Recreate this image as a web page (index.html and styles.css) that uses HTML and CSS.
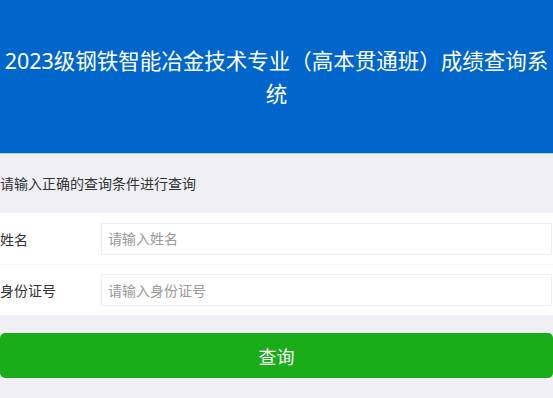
FILE: index.html
```html
<!DOCTYPE html>
<html lang="zh-CN">
<head>
    <meta charset="UTF-8">
    <meta name="viewport" content="width=device-width, initial-scale=1.0">
    <title>成绩查询系统</title>
    <link rel="stylesheet" href="styles.css">
</head>
<body>
    <div class="header">
        <h1 class="title">2023级钢铁智能冶金技术专业（高本贯通班）成绩查询系统</h1>
    </div>

    <div class="tips">请输入正确的查询条件进行查询</div>

    <div class="form">
        <div class="row">
            <label class="label" for="name">姓名</label>
            <input class="input" type="text" id="name" placeholder="请输入姓名">
        </div>
        <div class="row">
            <label class="label" for="idcard">身份证号</label>
            <input class="input" type="text" id="idcard" placeholder="请输入身份证号">
        </div>
    </div>

    <div class="actions">
        <button class="btn-query">查询</button>
    </div>
</body>
</html>
```

FILE: styles.css
```css
body {
  margin: 0;
  background-color: #efeff4;
  font-family: "Noto Sans", "Noto Sans CJK SC", sans-serif;
  color: #333;
}

.header {
  background-color: #0066cc;
  border-bottom: 1px solid #a9cdf0;
  height: 153px;
  display: flex;
  align-items: center;
  justify-content: center;
}

.title {
  margin: 0;
  font-size: 21.5px;
  font-weight: normal;
  line-height: 33px;
  color: #fff;
  text-align: center;
}

.tips {
  height: 59px;
  line-height: 59px;
  font-size: 14px;
  color: #333;
}

.form {
  background-color: #fff;
}

.row {
  display: flex;
  align-items: center;
  height: 51px;
}

.row + .row {
  border-top: 1px solid #f6f6f6;
  height: 50px;
}

.label {
  width: 101px;
  font-size: 14px;
  color: #333;
}

.input {
  flex: 1;
  height: 32px;
  box-sizing: border-box;
  border: 1px solid #eee;
  padding: 0 6px;
  font-size: 14px;
  font-family: inherit;
  color: #333;
  outline: none;
  margin-right: 1px;
}

.input::placeholder {
  color: #999;
}

.actions {
  padding: 18px 0;
}

.btn-query {
  display: block;
  width: 100%;
  height: 45px;
  border: none;
  border-radius: 5px;
  background-color: #1aad19;
  color: #fff;
  font-size: 18px;
  font-family: inherit;
  cursor: pointer;
}
```
